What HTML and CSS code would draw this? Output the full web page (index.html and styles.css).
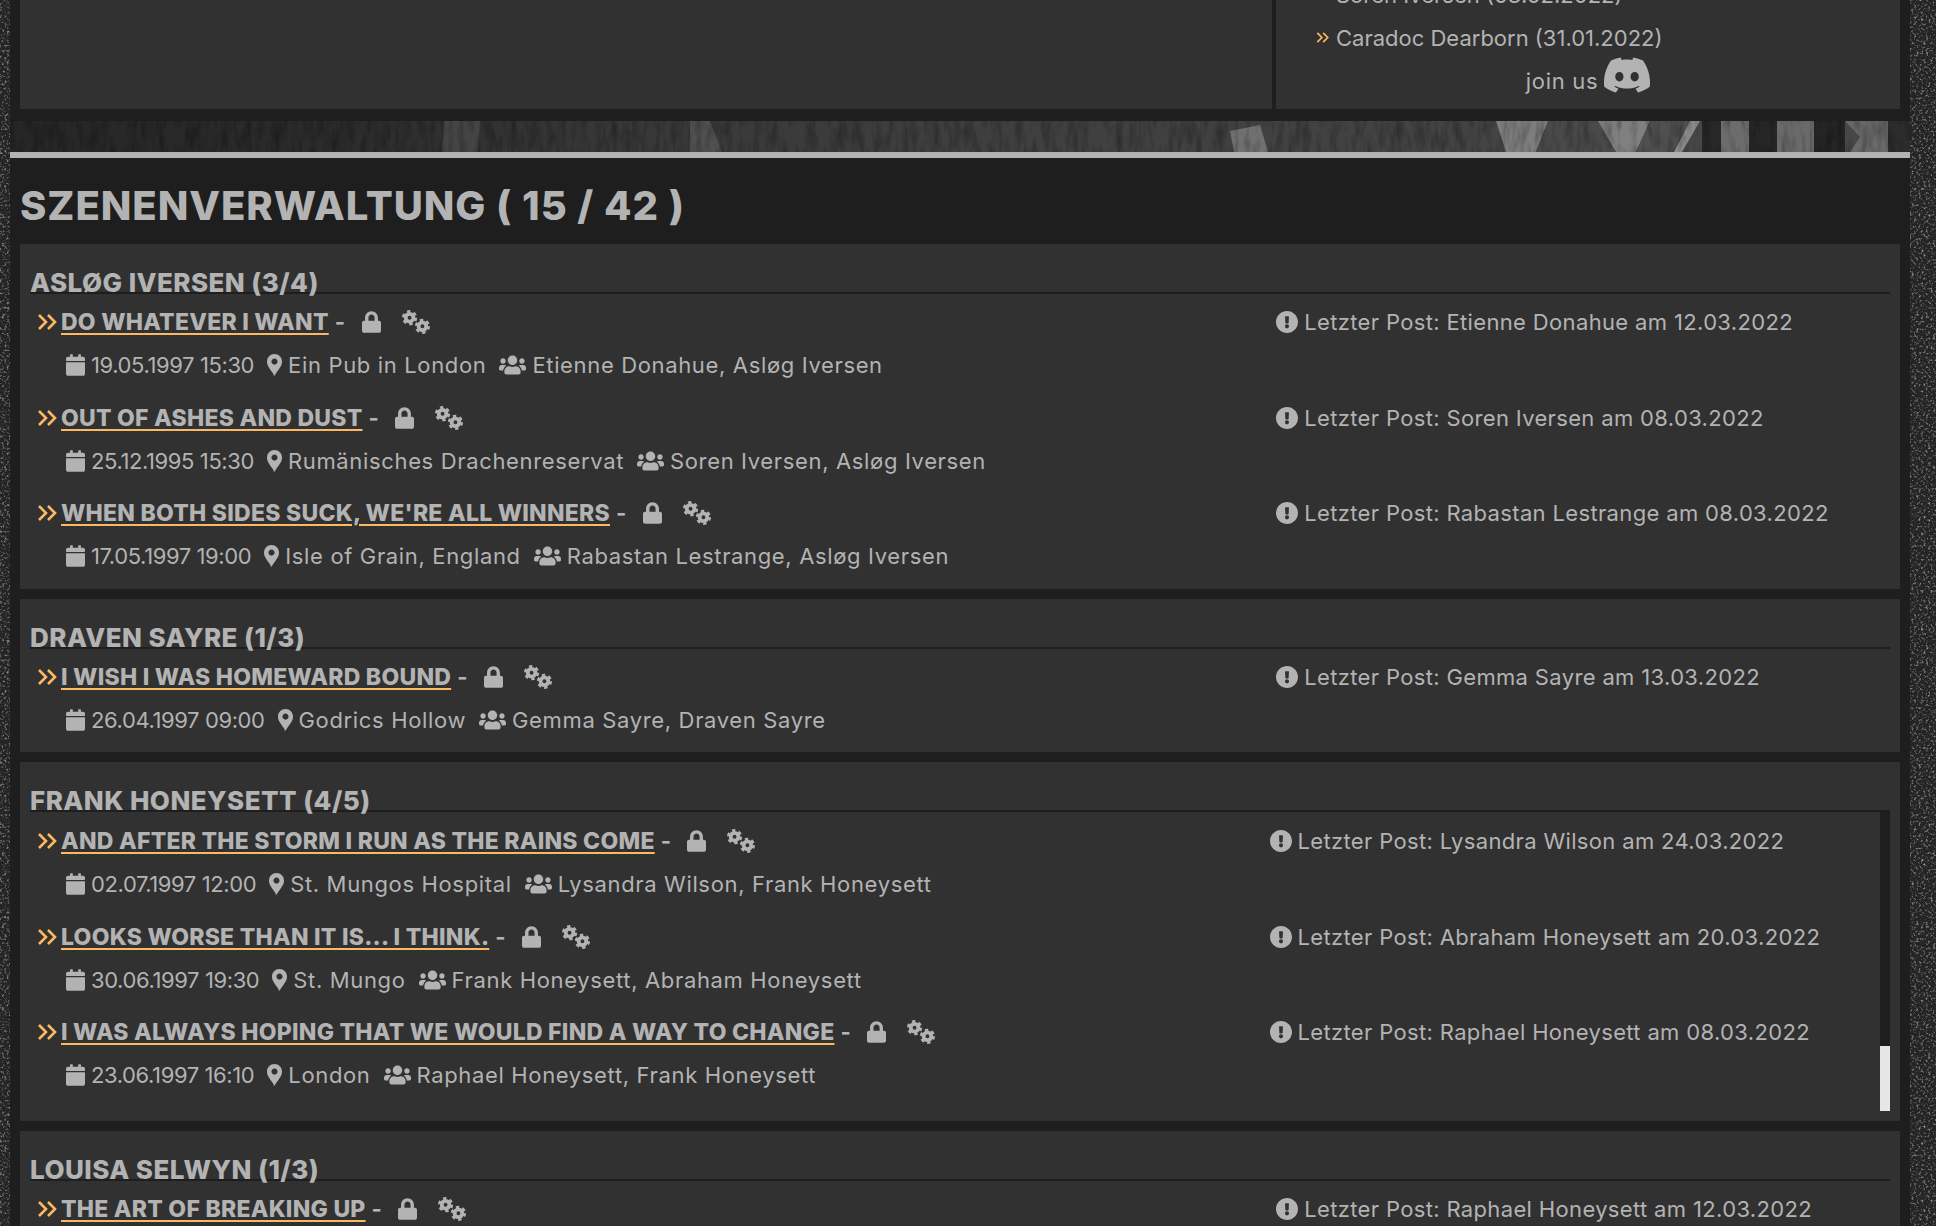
FILE: index.html
```html
<!DOCTYPE html>
<html lang="de">
<head>
<meta charset="utf-8">
<title>Szenenverwaltung</title>
<link rel="stylesheet" href="styles.css">
</head>
<body>
<svg class="sprites" width="0" height="0" aria-hidden="true">
  <defs>
    <filter id="grain" x="0" y="0" width="100%" height="100%">
      <feTurbulence type="fractalNoise" baseFrequency="0.42" numOctaves="3" seed="7"/>
      <feColorMatrix type="matrix" values="0 0 0 0 1  0 0 0 0 1  0 0 0 0 1  3 0 0 0 -1.55"/>
    </filter>
    <filter id="grainwide" x="0" y="0" width="100%" height="100%">
      <feTurbulence type="fractalNoise" baseFrequency="0.14 0.035" numOctaves="3" seed="11"/>
      <feColorMatrix type="matrix" values="0 0 0 0 0  0 0 0 0 0  0 0 0 0 0  2 0 0 0 -0.8"/>
    </filter>
    <symbol id="i-chev" viewBox="0 0 20 18"><path class="chev" d="M2 2l7 7-7 7M11 2l7 7-7 7"/></symbol>
    <symbol id="i-lock" viewBox="0 0 448 512"><path d="M400 224h-24v-72C376 68.2 307.8 0 224 0S72 68.2 72 152v72H48c-26.5 0-48 21.5-48 48v192c0 26.5 21.5 48 48 48h352c26.5 0 48-21.5 48-48V272c0-26.5-21.5-48-48-48zm-104 0H152v-72c0-39.7 32.3-72 72-72s72 32.3 72 72v72z"/></symbol>
    <symbol id="i-gears" viewBox="0 0 28 24">
      <g class="gear"><circle class="gear-ring" cx="8" cy="8" r="3.6"/><circle class="gear-teeth" cx="8" cy="8" r="5.9"/></g>
      <g class="gear"><circle class="gear-ring" cx="20" cy="16" r="3.6"/><circle class="gear-teeth" cx="20" cy="16" r="5.9"/></g>
    </symbol>
    <symbol id="i-cal" viewBox="0 0 448 512"><path d="M12 192h424c6.6 0 12 5.4 12 12v260c0 26.5-21.5 48-48 48H48c-26.5 0-48-21.5-48-48V204c0-6.6 5.4-12 12-12zm436-44v-36c0-26.5-21.5-48-48-48h-48V12c0-6.6-5.4-12-12-12h-40c-6.6 0-12 5.4-12 12v52H160V12c0-6.6-5.4-12-12-12h-40c-6.6 0-12 5.4-12 12v52H48C21.5 64 0 85.5 0 112v36c0 6.6 5.4 12 12 12h424c6.6 0 12-5.4 12-12z"/></symbol>
    <symbol id="i-pin" viewBox="0 0 352 512"><path d="M172.268 501.67C26.97 291.031 0 262.429 0 176 0 78.798 78.798 0 176 0s176 78.798 176 176c0 86.429-26.97 115.031-172.268 325.67-9.535 13.774-29.93 13.773-39.464 0zM176 248c39.765 0 72-32.235 72-72s-32.235-72-72-72-72 32.235-72 72 32.235 72 72 72z"/></symbol>
    <symbol id="i-users" viewBox="0 0 640 512"><path d="M96 224c35.3 0 64-28.7 64-64s-28.7-64-64-64-64 28.7-64 64 28.7 64 64 64zm448 0c35.3 0 64-28.7 64-64s-28.7-64-64-64-64 28.7-64 64 28.7 64 64 64zm32 32h-64c-17.6 0-33.5 7.1-45.1 18.6 40.3 22.1 68.9 62 75.1 109.4h66c17.7 0 32-14.3 32-32v-32c0-35.3-28.7-64-64-64zm-256 0c61.9 0 112-50.1 112-112S381.9 32 320 32 208 82.1 208 144s50.1 112 112 112zm76.8 32h-8.3c-20.8 10-43.9 16-68.5 16s-47.6-6-68.5-16h-8.3C179.6 288 128 339.6 128 403.2V432c0 26.5 21.5 48 48 48h288c26.5 0 48-21.5 48-48v-28.8c0-63.6-51.6-115.2-115.2-115.2zm-223.7-13.4C161.5 263.1 145.6 256 128 256H64c-35.3 0-64 28.7-64 64v32c0 17.7 14.3 32 32 32h65.9c6.3-47.4 34.9-87.3 75.2-109.4z"/></symbol>
    <symbol id="i-alert" viewBox="8 8 496 496"><path d="M504 256c0 136.997-111.043 248-248 248S8 392.997 8 256C8 119.083 119.043 8 256 8s248 111.083 248 248zm-248 50c-25.405 0-46 20.595-46 46s20.595 46 46 46 46-20.595 46-46-20.595-46-46-46zm-43.673-165.346l7.418 136c.347 6.364 5.609 11.346 11.982 11.346h48.546c6.373 0 11.635-4.982 11.982-11.346l7.418-136c.375-6.874-5.098-12.654-11.982-12.654h-63.383c-6.884 0-12.356 5.78-11.981 12.654z"/></symbol>
    <symbol id="i-discord" viewBox="0 0 24 24"><path d="M20.317 4.3698a19.7913 19.7913 0 00-4.8851-1.5152.0741.0741 0 00-.0785.0371c-.211.3753-.4447.8648-.6083 1.2495-1.8447-.2762-3.68-.2762-5.4868 0-.1636-.3933-.4058-.8742-.6177-1.2495a.077.077 0 00-.0785-.037 19.7363 19.7363 0 00-4.8852 1.515.0699.0699 0 00-.0321.0277C.5334 9.0458-.319 13.5799.0992 18.0578a.0824.0824 0 00.0312.0561c2.0528 1.5076 4.0413 2.4228 5.9929 3.0294a.0777.0777 0 00.0842-.0276c.4616-.6304.8731-1.2952 1.226-1.9942a.076.076 0 00-.0416-.1057c-.6528-.2476-1.2743-.5495-1.8722-.8923a.077.077 0 01-.0076-.1277c.1258-.0943.2517-.1923.3718-.2914a.0743.0743 0 01.0776-.0105c3.9278 1.7933 8.18 1.7933 12.0614 0a.0739.0739 0 01.0785.0095c.1202.099.246.1981.3728.2924a.077.077 0 01-.0066.1276 12.2986 12.2986 0 01-1.873.8914.0766.0766 0 00-.0407.1067c.3604.698.7719 1.3628 1.225 1.9932a.076.076 0 00.0842.0286c1.961-.6067 3.9495-1.5219 6.0023-3.0294a.077.077 0 00.0313-.0552c.5004-5.177-.8382-9.6739-3.5485-13.6604a.061.061 0 00-.0312-.0286zM8.02 15.3312c-1.1825 0-2.1569-1.0857-2.1569-2.419 0-1.3332.9555-2.4189 2.157-2.4189 1.2108 0 2.1757 1.0952 2.1568 2.419 0 1.3332-.9555 2.4189-2.1569 2.4189zm7.9748 0c-1.1825 0-2.1569-1.0857-2.1569-2.419 0-1.3332.9554-2.4189 2.1569-2.4189 1.2108 0 2.1757 1.0952 2.1568 2.419 0 1.3332-.946 2.4189-2.1568 2.4189z"/></symbol>
  </defs>
</svg>

<svg class="backdrop" width="1936" height="1226" aria-hidden="true"><rect width="1936" height="1226" class="backdrop-base"/><rect width="1936" height="1226" filter="url(#grain)" class="backdrop-grain"/></svg>

<div class="page">
  <div class="top">
    <div class="panel"></div>
    <div class="panel side">
      <ul class="last-list">
        <li><svg class="mini-chev"><use href="#i-chev"/></svg>Soren Iversen (03.02.2022)</li>
        <li><svg class="mini-chev"><use href="#i-chev"/></svg>Caradoc Dearborn (31.01.2022)</li>
      </ul>
      <div class="join">join us <svg class="discord"><use href="#i-discord"/></svg></div>
    </div>
  </div>

  <div class="strip">
    <svg width="1900" height="31" viewBox="0 0 1900 31" preserveAspectRatio="none" aria-hidden="true">
      <defs><linearGradient id="stripfade" x1="0" x2="1" y1="0" y2="0">
        <stop offset="0" stop-color="#262626"/><stop offset=".17" stop-color="#2b2b2b"/><stop offset=".3" stop-color="#363636"/><stop offset=".48" stop-color="#3e3e3e"/><stop offset=".7" stop-color="#424242"/><stop offset="1" stop-color="#484848"/>
      </linearGradient></defs>
      <rect width="1900" height="31" fill="url(#stripfade)"/>
      <polygon points="434,0 470,0 468,31 432,31" fill="#444"/>
      <polygon points="680,0 700,0 712,31 680,31" fill="#505050"/>
      <polygon points="1220,10 1250,4 1258,31 1224,31" fill="#707070"/>
      <polygon points="1486,0 1538,0 1526,31 1496,31" fill="#7e7e7e"/>
      <polygon points="1538,0 1588,0 1606,31 1526,31" fill="#4a4a4a"/>
      <polygon points="1588,0 1640,0 1626,31 1606,31" fill="#808080"/>
      <polygon points="1640,0 1680,0 1662,31 1626,31" fill="#505050"/>
      <polygon points="1680,0 1690,0 1672,31 1664,31" fill="#8a8a8a"/>
      <rect x="1692" y="0" width="19" height="31" fill="#282828"/>
      <rect x="1711" y="0" width="28" height="31" fill="#6c6c6c"/>
      <rect x="1739" y="0" width="28" height="31" fill="#262626"/>
      <rect x="1767" y="0" width="37" height="31" fill="#6a6a6a"/>
      <rect x="1804" y="0" width="31" height="31" fill="#242424"/>
      <polygon points="1835,0 1878,0 1878,31 1840,31 1850,16" fill="#6a6a6a"/>
      <rect x="1878" y="0" width="22" height="31" fill="#2c2c2c"/>
      <rect width="1900" height="31" filter="url(#grainwide)" class="strip-grain"/>
    </svg>
  </div>
  <div class="rule"></div>

  <main class="main">
    <h1 class="title">SZENENVERWALTUNG ( 15 / 42 )</h1>

    <section class="group">
      <h2 class="group-head">ASLØG IVERSEN (3/4)</h2>
      <div class="row">
        <div class="row-main">
          <div class="scene"><svg class="chevron"><use href="#i-chev"/></svg><a class="scene-link" href="#">DO WHATEVER I WANT</a><span class="dash">-</span><svg class="lock"><use href="#i-lock"/></svg><svg class="gears"><use href="#i-gears"/></svg></div>
          <div class="meta"><svg class="ic-cal"><use href="#i-cal"/></svg><span class="meta-date">19.05.1997 15:30</span><svg class="ic-pin"><use href="#i-pin"/></svg><span class="meta-text">Ein Pub in London</span><svg class="ic-users"><use href="#i-users"/></svg><span>Etienne Donahue, Asløg Iversen</span></div>
        </div>
        <div class="last"><svg class="ic-alert"><use href="#i-alert"/></svg>Letzter Post: Etienne Donahue am 12.03.2022</div>
      </div>
      <div class="row">
        <div class="row-main">
          <div class="scene"><svg class="chevron"><use href="#i-chev"/></svg><a class="scene-link" href="#">OUT OF ASHES AND DUST</a><span class="dash">-</span><svg class="lock"><use href="#i-lock"/></svg><svg class="gears"><use href="#i-gears"/></svg></div>
          <div class="meta"><svg class="ic-cal"><use href="#i-cal"/></svg><span class="meta-date">25.12.1995 15:30</span><svg class="ic-pin"><use href="#i-pin"/></svg><span class="meta-text">Rumänisches Drachenreservat</span><svg class="ic-users"><use href="#i-users"/></svg><span>Soren Iversen, Asløg Iversen</span></div>
        </div>
        <div class="last"><svg class="ic-alert"><use href="#i-alert"/></svg>Letzter Post: Soren Iversen am 08.03.2022</div>
      </div>
      <div class="row">
        <div class="row-main">
          <div class="scene"><svg class="chevron"><use href="#i-chev"/></svg><a class="scene-link" href="#">WHEN BOTH SIDES SUCK, WE'RE ALL WINNERS</a><span class="dash">-</span><svg class="lock"><use href="#i-lock"/></svg><svg class="gears"><use href="#i-gears"/></svg></div>
          <div class="meta"><svg class="ic-cal"><use href="#i-cal"/></svg><span class="meta-date">17.05.1997 19:00</span><svg class="ic-pin"><use href="#i-pin"/></svg><span class="meta-text">Isle of Grain, England</span><svg class="ic-users"><use href="#i-users"/></svg><span>Rabastan Lestrange, Asløg Iversen</span></div>
        </div>
        <div class="last"><svg class="ic-alert"><use href="#i-alert"/></svg>Letzter Post: Rabastan Lestrange am 08.03.2022</div>
      </div>
    </section>

    <section class="group">
      <h2 class="group-head">DRAVEN SAYRE (1/3)</h2>
      <div class="row">
        <div class="row-main">
          <div class="scene"><svg class="chevron"><use href="#i-chev"/></svg><a class="scene-link" href="#">I WISH I WAS HOMEWARD BOUND</a><span class="dash">-</span><svg class="lock"><use href="#i-lock"/></svg><svg class="gears"><use href="#i-gears"/></svg></div>
          <div class="meta"><svg class="ic-cal"><use href="#i-cal"/></svg><span class="meta-date">26.04.1997 09:00</span><svg class="ic-pin"><use href="#i-pin"/></svg><span class="meta-text">Godrics Hollow</span><svg class="ic-users"><use href="#i-users"/></svg><span>Gemma Sayre, Draven Sayre</span></div>
        </div>
        <div class="last"><svg class="ic-alert"><use href="#i-alert"/></svg>Letzter Post: Gemma Sayre am 13.03.2022</div>
      </div>
    </section>

    <section class="group group-scroll">
      <h2 class="group-head">FRANK HONEYSETT (4/5)</h2>
      <div class="scroller">
        <div class="scroll-body">
          <div class="row">
            <div class="row-main">
              <div class="scene"><svg class="chevron"><use href="#i-chev"/></svg><a class="scene-link" href="#">AND AFTER THE STORM I RUN AS THE RAINS COME</a><span class="dash">-</span><svg class="lock"><use href="#i-lock"/></svg><svg class="gears"><use href="#i-gears"/></svg></div>
              <div class="meta"><svg class="ic-cal"><use href="#i-cal"/></svg><span class="meta-date">02.07.1997 12:00</span><svg class="ic-pin"><use href="#i-pin"/></svg><span class="meta-text">St. Mungos Hospital</span><svg class="ic-users"><use href="#i-users"/></svg><span>Lysandra Wilson, Frank Honeysett</span></div>
            </div>
            <div class="last"><svg class="ic-alert"><use href="#i-alert"/></svg>Letzter Post: Lysandra Wilson am 24.03.2022</div>
          </div>
          <div class="row">
            <div class="row-main">
              <div class="scene"><svg class="chevron"><use href="#i-chev"/></svg><a class="scene-link" href="#">LOOKS WORSE THAN IT IS... I THINK.</a><span class="dash">-</span><svg class="lock"><use href="#i-lock"/></svg><svg class="gears"><use href="#i-gears"/></svg></div>
              <div class="meta"><svg class="ic-cal"><use href="#i-cal"/></svg><span class="meta-date">30.06.1997 19:30</span><svg class="ic-pin"><use href="#i-pin"/></svg><span class="meta-text">St. Mungo</span><svg class="ic-users"><use href="#i-users"/></svg><span>Frank Honeysett, Abraham Honeysett</span></div>
            </div>
            <div class="last"><svg class="ic-alert"><use href="#i-alert"/></svg>Letzter Post: Abraham Honeysett am 20.03.2022</div>
          </div>
          <div class="row">
            <div class="row-main">
              <div class="scene"><svg class="chevron"><use href="#i-chev"/></svg><a class="scene-link" href="#">I WAS ALWAYS HOPING THAT WE WOULD FIND A WAY TO CHANGE</a><span class="dash">-</span><svg class="lock"><use href="#i-lock"/></svg><svg class="gears"><use href="#i-gears"/></svg></div>
              <div class="meta"><svg class="ic-cal"><use href="#i-cal"/></svg><span class="meta-date">23.06.1997 16:10</span><svg class="ic-pin"><use href="#i-pin"/></svg><span class="meta-text">London</span><svg class="ic-users"><use href="#i-users"/></svg><span>Raphael Honeysett, Frank Honeysett</span></div>
            </div>
            <div class="last"><svg class="ic-alert"><use href="#i-alert"/></svg>Letzter Post: Raphael Honeysett am 08.03.2022</div>
          </div>
        </div>
        <div class="track"><div class="thumb"></div></div>
      </div>
    </section>

    <section class="group">
      <h2 class="group-head">LOUISA SELWYN (1/3)</h2>
      <div class="row">
        <div class="row-main">
          <div class="scene"><svg class="chevron"><use href="#i-chev"/></svg><a class="scene-link" href="#">THE ART OF BREAKING UP</a><span class="dash">-</span><svg class="lock"><use href="#i-lock"/></svg><svg class="gears"><use href="#i-gears"/></svg></div>
        </div>
        <div class="last"><svg class="ic-alert"><use href="#i-alert"/></svg>Letzter Post: Raphael Honeysett am 12.03.2022</div>
      </div>
    </section>
  </main>
</div>
</body>
</html>
```

FILE: styles.css
```css
* { box-sizing: border-box; }

html, body {
  margin: 0;
  height: 100%;
  overflow: hidden;
}

body {
  background: #1c1c1c;
  color: #b3b3b3;
  font-family: Inter, "Open Sans", "Liberation Sans", sans-serif;
  font-size: 22px;
  letter-spacing: .5px;
}

svg { fill: currentColor; display: block; }

.sprites { position: absolute; }

.backdrop { position: fixed; left: 0; top: 0; z-index: 0; }
.backdrop-base { fill: #242424; }
.backdrop-grain { opacity: .5; }

.chev { fill: none; stroke: #fdb863; stroke-width: 2.6; }

.gear-ring { fill: none; stroke: currentColor; stroke-width: 3.6; }
.gear-teeth { fill: none; stroke: currentColor; stroke-width: 2.4; stroke-dasharray: 3.1 3.08; }

.page {
  position: relative;
  z-index: 1;
  width: 1900px;
  margin-left: 10px;
  min-height: 1226px;
  background: #1e1e1e;
}

.top {
  display: grid;
  grid-template-columns: 1252fr 624fr;
  gap: 4px;
  height: 121px;
  padding: 0 10px 12px;
}

.panel { background: #313131; }

.side {
  display: flex;
  flex-direction: column;
  justify-content: flex-end;
  overflow: hidden;
  padding-bottom: 11px;
}

.last-list {
  list-style: none;
  margin: 0;
  padding: 0 0 0 40px;
  letter-spacing: 0;
}

.last-list li {
  display: flex;
  align-items: center;
  height: 43px;
}

.mini-chev { width: 13px; height: 15px; margin-right: 7px; flex: none; }

.join {
  display: flex;
  align-items: center;
  justify-content: center;
  gap: 6px;
  height: 36px;
  margin-top: 5px;
  letter-spacing: .7px;
}

.discord { width: 46px; height: 46px; margin-top: -12px; }

.strip { height: 31px; overflow: hidden; }
.strip-grain { opacity: .3; }

.rule { height: 6px; background: #b3b3b3; }

.main { padding: 0 10px; }

.title {
  margin: 0;
  height: 86px;
  padding-top: 24px;
  font-size: 40px;
  line-height: 48px;
  font-weight: 800;
  letter-spacing: .95px;
}

.group {
  background: #313131;
  padding: 0 10px 8px;
  margin-bottom: 10px;
}

.group-scroll { padding-bottom: 10px; }

.group-head {
  margin: 0;
  height: 50px;
  padding-top: 22px;
  border-bottom: 2px solid #1e1e1e;
  font-size: 26px;
  line-height: 34px;
  font-weight: 800;
  letter-spacing: .45px;
}

.scroller {
  display: grid;
  grid-template-columns: 1fr 10px;
  height: 299px;
}

.scroll-body { padding-top: 1px; }

.track {
  display: flex;
  flex-direction: column;
  justify-content: flex-end;
  background: #1e1e1e;
}

.thumb { height: 65px; background: #e6e6e6; }

.row {
  display: grid;
  grid-template-columns: 67% 33%;
  height: 95.5px;
}

.row-main { padding-left: 7px; min-width: 0; }

.scene {
  display: flex;
  align-items: center;
  height: 56px;
}

.chevron { width: 20px; height: 18px; margin-right: 4px; flex: none; }

.scene-link {
  color: inherit;
  font-size: 23px;
  font-weight: 800;
  letter-spacing: .25px;
  text-decoration: underline;
  text-decoration-color: #fdb863;
  text-decoration-thickness: 2px;
  text-underline-offset: 3px;
}

.dash { margin-left: 6px; font-weight: 700; }

.lock { width: 19px; height: 22px; margin-left: 16px; flex: none; }
.gears { width: 30px; height: 26px; margin-left: 20px; flex: none; }

.meta {
  display: flex;
  align-items: center;
  height: 30px;
  padding-left: 29px;
  letter-spacing: .65px;
}

.meta-date { margin-right: 13px; letter-spacing: -.4px; }
.meta-text { margin-right: 13px; }

.ic-cal { width: 19px; height: 22px; margin-right: 6px; flex: none; }
.ic-pin { width: 15px; height: 22px; margin-right: 6px; flex: none; }
.ic-users { width: 27px; height: 22px; margin-right: 6px; flex: none; }

.last {
  display: flex;
  align-items: center;
  height: 56px;
  white-space: nowrap;
  letter-spacing: .35px;
}

.ic-alert { width: 22px; height: 22px; margin-right: 6px; flex: none; }
```
